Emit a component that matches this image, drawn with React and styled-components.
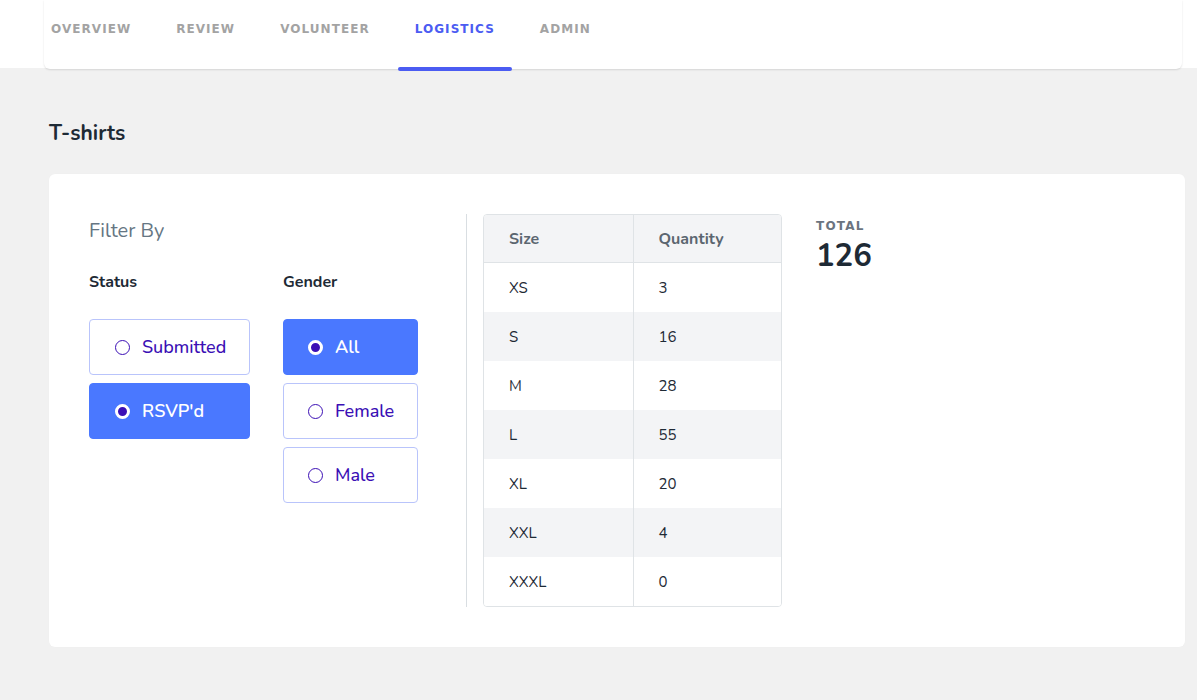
import React, { useState } from "react";
import styled, { createGlobalStyle } from "styled-components";

const GlobalStyle = createGlobalStyle`
  html, body { margin: 0; padding: 0; background: #f1f1f1; }
  body { font-family: "Nunito", "Lato", "Noto Sans", sans-serif; color: #1e2a35; }
  * { box-sizing: border-box; }
`;

const TopBar = styled.header`
  background: #ffffff;
  height: 68px;
`;

const NavCard = styled.nav`
  margin: 0 15px 0 44px;
  height: 69px;
  background: #ffffff;
  border-radius: 0 0 6px 6px;
  box-shadow: 0 1px 2px rgba(0, 0, 0, 0.12);
`;

const TabList = styled.ul`
  list-style: none;
  margin: 0 0 0 -10px;
  padding: 0;
  display: flex;
  gap: 11px;
`;

const Tab = styled.li`
  position: relative;
  height: 68px;
  padding: 22px 17px 0;
  font-family: "DejaVu Sans", "Open Sans", sans-serif;
  font-weight: 700;
  font-size: 12px;
  letter-spacing: 1.05px;
  color: ${(p) => (p.$active ? "#4b5cf2" : "#a3a3a3")};
  cursor: pointer;
`;

const Underline = styled.span`
  position: absolute;
  left: 0;
  right: 0;
  top: 67px;
  height: 4px;
  border-radius: 2px;
  background: #4b5cf2;
`;

const Main = styled.main`
  padding: 0 12px 50px 49px;
`;

const Heading = styled.h2`
  margin: 52px 0 28px;
  font-size: 21px;
  line-height: 26px;
  font-weight: 700;
  color: #1e2a35;
`;

const Card = styled.section`
  background: #ffffff;
  border-radius: 6px;
  padding: 40px 40px 40px 40px;
  display: flex;
  align-items: stretch;
  box-shadow: 0 0 1px rgba(0, 0, 0, 0.04);
`;

const FilterPanel = styled.div`
  padding-top: 5px;
  margin-right: 48px;
`;

const FilterTitle = styled.h3`
  margin: 0 0 29px;
  font-size: 20px;
  line-height: 24px;
  font-weight: 400;
  color: #667683;
`;

const Groups = styled.div`
  display: flex;
  gap: 33px;
`;

const Group = styled.div`
  display: flex;
  flex-direction: column;
  width: ${(p) => p.$width}px;
`;

const GroupLabel = styled.div`
  font-size: 16px;
  line-height: 20px;
  font-weight: 700;
  color: #1e2a35;
  margin-bottom: 27px;
`;

const Options = styled.div`
  display: flex;
  flex-direction: column;
  gap: 8px;
`;

const Option = styled.button`
  display: flex;
  align-items: center;
  gap: 12px;
  height: 56px;
  width: 100%;
  padding: 0 0 0 ${(p) => p.$pad}px;
  border: 1px solid ${(p) => (p.$selected ? "#4a78ff" : "#b9c4fb")};
  border-radius: 4px;
  background: ${(p) => (p.$selected ? "#4a78ff" : "#ffffff")};
  color: ${(p) => (p.$selected ? "#ffffff" : "#3b0fb5")};
  font-family: inherit;
  font-size: 18px;
  font-weight: ${(p) => (p.$selected ? 600 : 500)};
  cursor: pointer;
  text-align: left;
`;

const RadioDot = styled.span`
  flex: none;
  width: 15px;
  height: 15px;
  border-radius: 50%;
  background: ${(p) => (p.$selected ? "#3b0fb5" : "#ffffff")};
  border: ${(p) => (p.$selected ? "3px solid #ffffff" : "1.5px solid #3b0fb5")};
`;

const Divider = styled.div`
  width: 1px;
  background: #d9dee2;
  margin-right: 16px;
`;

const Table = styled.table`
  width: 299px;
  border-collapse: separate;
  border-spacing: 0;
  border: 1px solid #dfe3e6;
  border-radius: 4px;
  overflow: hidden;
  align-self: flex-start;
  margin-right: 34px;
`;

const Th = styled.th`
  height: 48px;
  padding: 0 0 0 25px;
  text-align: left;
  font-size: 16px;
  font-weight: 700;
  color: #5b6670;
  background: #f3f4f6;
  border-bottom: 1px solid #dfe3e6;
  border-left: ${(p) => (p.$first ? "none" : "1px solid #dfe3e6")};
  width: 50%;
`;

const Td = styled.td`
  height: 49px;
  padding: 0 0 0 25px;
  font-size: 15px;
  color: #1e2a35;
  background: ${(p) => (p.$striped ? "#f3f4f6" : "#ffffff")};
  border-left: ${(p) => (p.$first ? "none" : "1px solid #dfe3e6")};
`;

const TotalBox = styled.div`
  padding-top: 5px;
`;

const TotalLabel = styled.div`
  font-family: "DejaVu Sans", "Open Sans", sans-serif;
  font-size: 12px;
  line-height: 14px;
  font-weight: 700;
  letter-spacing: 1.2px;
  color: #6b7480;
`;

const TotalValue = styled.div`
  margin-top: 5px;
  font-size: 31px;
  line-height: 36px;
  font-weight: 700;
  color: #1e2a35;
`;

const tabs = ["OVERVIEW", "REVIEW", "VOLUNTEER", "LOGISTICS", "ADMIN"];
const sizes = [
  ["XS", 3],
  ["S", 16],
  ["M", 28],
  ["L", 55],
  ["XL", 20],
  ["XXL", 4],
  ["XXXL", 0],
];

function RadioGroup({ label, options, value, onChange, width, pad }) {
  return (
    <Group $width={width}>
      <GroupLabel>{label}</GroupLabel>
      <Options>
        {options.map((o) => (
          <Option key={o} $selected={o === value} $pad={pad} onClick={() => onChange(o)}>
            <RadioDot $selected={o === value} />
            {o}
          </Option>
        ))}
      </Options>
    </Group>
  );
}

export default function App() {
  const [status, setStatus] = useState("RSVP'd");
  const [gender, setGender] = useState("All");
  const total = sizes.reduce((s, [, q]) => s + q, 0);
  return (
    <>
      <GlobalStyle />
      <TopBar>
        <NavCard>
          <TabList>
            {tabs.map((t) => (
              <Tab key={t} $active={t === "LOGISTICS"}>
                {t}
                {t === "LOGISTICS" && <Underline />}
              </Tab>
            ))}
          </TabList>
        </NavCard>
      </TopBar>
      <Main>
        <Heading>T-shirts</Heading>
        <Card>
          <FilterPanel>
            <FilterTitle>Filter By</FilterTitle>
            <Groups>
              <RadioGroup
                label="Status"
                options={["Submitted", "RSVP'd"]}
                value={status}
                onChange={setStatus}
                width={161}
                pad={25}
              />
              <RadioGroup
                label="Gender"
                options={["All", "Female", "Male"]}
                value={gender}
                onChange={setGender}
                width={135}
                pad={24}
              />
            </Groups>
          </FilterPanel>
          <Divider />
          <Table>
            <thead>
              <tr>
                <Th $first>Size</Th>
                <Th>Quantity</Th>
              </tr>
            </thead>
            <tbody>
              {sizes.map(([s, q], i) => (
                <tr key={s}>
                  <Td $first $striped={i % 2 === 1}>{s}</Td>
                  <Td $striped={i % 2 === 1}>{q}</Td>
                </tr>
              ))}
            </tbody>
          </Table>
          <TotalBox>
            <TotalLabel>TOTAL</TotalLabel>
            <TotalValue>{total}</TotalValue>
          </TotalBox>
        </Card>
      </Main>
    </>
  );
}
